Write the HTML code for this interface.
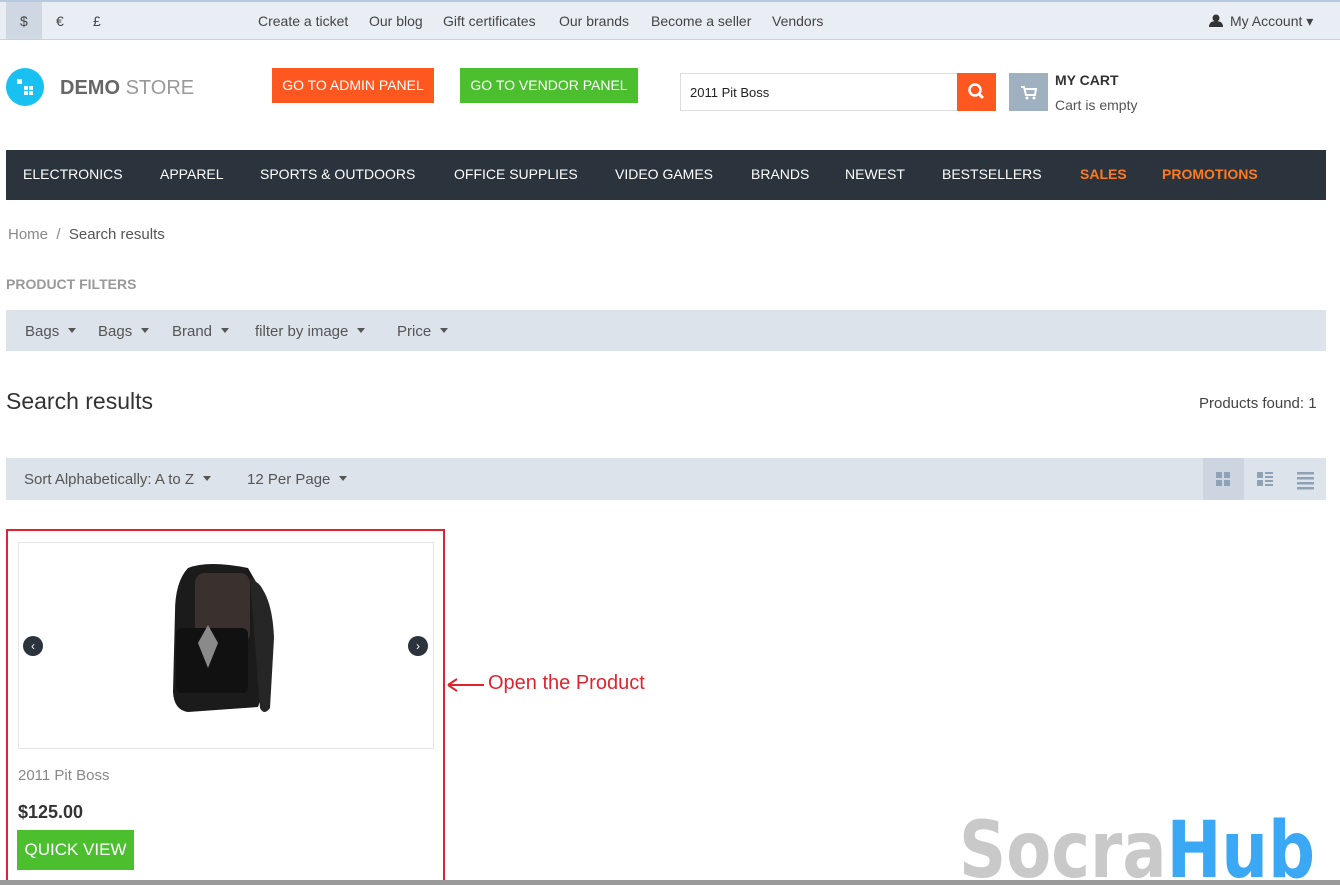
<!DOCTYPE html>
<html><head><meta charset="utf-8"><style>
*{box-sizing:border-box;margin:0;padding:0}
body{width:1340px;height:885px;overflow:hidden;background:#fff;font-family:"Liberation Sans",sans-serif;color:#333;position:relative}
.abs{position:absolute}
.top{left:0;top:0;width:1340px;height:40px;background:#e8eef4;border-top:2px solid #b7c9de;border-bottom:1px solid #c4d3e3;font-size:14px;color:#444}
.top span{position:absolute;top:11px}
.btn{position:absolute;color:#fff;font-size:14px;text-align:center;line-height:34px;height:35px}
.nav{left:6px;top:150px;width:1320px;height:50px;background:#2b333d;color:#fff;font-size:14px}
.nav span{position:absolute;top:16px}
.bar{background:#dde3ea;left:6px;width:1320px}
.dd{position:absolute;font-size:15px;color:#555}
.dd:after{content:"";display:inline-block;margin-left:9px;vertical-align:3px;border-left:4px solid transparent;border-right:4px solid transparent;border-top:5px solid #555}
</style></head><body>
<div class="abs top">
<div class="abs" style="left:6px;top:0;width:36px;height:37px;background:#cfd8e2"></div>
<span style="left:20px">$</span><span style="left:56px">€</span><span style="left:93px">£</span>
<span style="left:258px">Create a ticket</span><span style="left:369px">Our blog</span><span style="left:443px">Gift certificates</span><span style="left:559px">Our brands</span><span style="left:651px">Become a seller</span><span style="left:772px">Vendors</span>
<svg class="abs" style="left:1209px;top:12px" width="14" height="14" fill="#333"><circle cx="7" cy="4" r="3.5"/><path d="M0 13q0-6 7-6t7 6z"/></svg><span style="left:1230px">My Account ▾</span>
</div>
<div class="abs" style="left:6px;top:68px;width:38px;height:38px;border-radius:50%;background:#19c1f2"></div>
<div class="abs" style="left:17px;top:79px;width:5px;height:5px;background:#fff"></div>
<div class="abs" style="left:24px;top:86px;width:4px;height:4px;background:#fff;box-shadow:5px 0 #fff,0 5px #fff,5px 5px #fff"></div>
<div class="abs" style="left:60px;top:77px;font-size:20px;color:#666"><b>DEMO</b> <span style="color:#999">STORE</span></div>
<div class="btn" style="left:272px;top:68px;width:162px;background:#fe5720">GO TO ADMIN PANEL</div>
<div class="btn" style="left:460px;top:68px;width:178px;background:#4cbf2f">GO TO VENDOR PANEL</div>
<div class="abs" style="left:680px;top:73px;width:278px;height:38px;border:1px solid #ddd;font-size:13px;padding:11px 9px;color:#222">2011 Pit Boss</div>
<div class="abs" style="left:957px;top:73px;width:39px;height:38px;background:#fe5720">
<svg width="39" height="38"><circle cx="18" cy="17" r="5.5" fill="none" stroke="#fff" stroke-width="2.5"/><line x1="22" y1="21" x2="26" y2="25" stroke="#fff" stroke-width="3"/></svg></div>
<div class="abs" style="left:1009px;top:73px;width:39px;height:38px;background:#9fb0c0">
<svg width="39" height="38"><path d="M12 14h3l2 8h9l1-6H16" fill="none" stroke="#fff" stroke-width="2"/><circle cx="18" cy="25" r="1.5" fill="#fff"/><circle cx="25" cy="25" r="1.5" fill="#fff"/></svg></div>
<div class="abs" style="left:1055px;top:72px;font-size:14px;font-weight:bold;color:#333">MY CART</div>
<div class="abs" style="left:1055px;top:97px;font-size:14px;color:#555">Cart is empty</div>
<div class="abs nav">
<span style="left:17px">ELECTRONICS</span><span style="left:154px">APPAREL</span><span style="left:254px">SPORTS &amp; OUTDOORS</span><span style="left:448px">OFFICE SUPPLIES</span><span style="left:609px">VIDEO GAMES</span><span style="left:745px">BRANDS</span><span style="left:839px">NEWEST</span><span style="left:936px">BESTSELLERS</span><span style="left:1074px;color:#ff7a1d;font-weight:bold">SALES</span><span style="left:1156px;color:#ff7a1d;font-weight:bold">PROMOTIONS</span>
</div>
<div class="abs" style="left:8px;top:226px;font-size:15px;color:#888">Home &nbsp;/&nbsp; <span style="color:#555">Search results</span></div>
<div class="abs" style="left:6px;top:276px;font-size:14px;font-weight:bold;color:#999">PRODUCT FILTERS</div>
<div class="abs bar" style="top:310px;height:41px"></div>
<span class="dd" style="left:25px;top:323px">Bags</span><span class="dd" style="left:98px;top:323px">Bags</span><span class="dd" style="left:172px;top:323px">Brand</span><span class="dd" style="left:255px;top:323px">filter by image</span><span class="dd" style="left:397px;top:323px">Price</span>
<div class="abs" style="left:6px;top:388px;font-size:23px;color:#333">Search results</div>
<div class="abs" style="left:1199px;top:395px;font-size:15px;color:#444">Products found: 1</div>
<div class="abs bar" style="top:458px;height:42px"></div>
<span class="dd" style="left:24px;top:471px">Sort Alphabetically: A to Z</span><span class="dd" style="left:247px;top:471px">12 Per Page</span>
<div class="abs" style="left:1203px;top:458px;width:41px;height:42px;background:#cdd6e0"></div>
<svg class="abs" style="left:1203px;top:458px" width="123" height="42" fill="#8fa2b5">
<rect x="13" y="14" width="6" height="6"/><rect x="21" y="14" width="6" height="6"/><rect x="13" y="22" width="6" height="6"/><rect x="21" y="22" width="6" height="6"/>
<rect x="54" y="14" width="6" height="6"/><rect x="54" y="22" width="6" height="6"/><rect x="62" y="14" width="8" height="2"/><rect x="62" y="18" width="8" height="2"/><rect x="62" y="22" width="8" height="2"/><rect x="62" y="26" width="8" height="2"/>
<rect x="94" y="14" width="17" height="2.5"/><rect x="94" y="19" width="17" height="2.5"/><rect x="94" y="24" width="17" height="2.5"/><rect x="94" y="29" width="17" height="2.5"/>
</svg>
<div class="abs" style="left:6px;top:529px;width:439px;height:355px;border:2px solid #e0242f"></div>
<div class="abs" style="left:18px;top:542px;width:416px;height:207px;border:1px solid #e6e6e6"></div>
<svg class="abs" style="left:150px;top:558px" width="150" height="170">
<path d="M38 10 q20-8 60 0 l8 14 q12 6 10 40 l-2 45 q-2 30-6 40 l-70 5 q-14-2-15-20 l2-80 q0-30 13-44z" fill="#1b1b1b"/>
<path d="M100 20 q22 10 24 60 l-4 70 q-6 8-10 0z" fill="#262626"/>
<rect x="45" y="15" width="55" height="70" rx="10" fill="#3a302e"/>
<rect x="26" y="70" width="72" height="65" rx="6" fill="#111"/>
<path d="M48 85 l10-18 10 18 -10 25z" fill="#8a8a8a"/>
</svg>
<div class="abs" style="left:23px;top:636px;width:20px;height:20px;border-radius:50%;background:#2b333d;color:#fff;font-size:12px;text-align:center;line-height:20px">‹</div>
<div class="abs" style="left:408px;top:636px;width:20px;height:20px;border-radius:50%;background:#2b333d;color:#fff;font-size:12px;text-align:center;line-height:20px">›</div>
<div class="abs" style="left:18px;top:767px;font-size:15px;color:#888">2011 Pit Boss</div>
<div class="abs" style="left:18px;top:802px;font-size:18px;font-weight:bold;color:#333">$125.00</div>
<div class="abs" style="left:17px;top:830px;width:117px;height:40px;background:#4cbf2f;color:#fff;font-size:17px;text-align:center;line-height:40px">QUICK VIEW</div>
<svg class="abs" style="left:446px;top:675px" width="40" height="20"><path d="M2 10h36M2 10l9-6M2 10l9 6" stroke="#e0242f" stroke-width="2" fill="none"/></svg>
<div class="abs" style="left:488px;top:672px;font-size:20px;color:#e0242f">Open the Product</div>
<svg class="abs" style="left:955px;top:805px" width="370" height="80"><text x="4" y="72" textLength="356" lengthAdjust="spacingAndGlyphs" font-family="DejaVu Sans" font-weight="bold" font-size="78"><tspan fill="#c9c9c9">Socra</tspan><tspan fill="#3aa8f4">Hub</tspan></text></svg>
<div class="abs" style="left:0;top:880px;width:1340px;height:5px;background:#9a9a9a"></div>
</body></html>
